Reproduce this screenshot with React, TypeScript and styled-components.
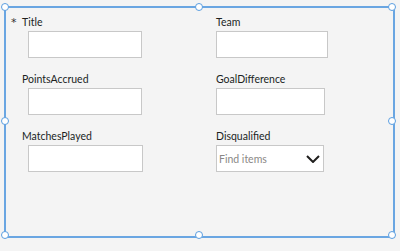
import React from "react";
import styled, { createGlobalStyle } from "styled-components";

const Global = createGlobalStyle`
  html, body { margin: 0; padding: 0; background: #f4f4f4; }
  body { font-family: Lato, "Open Sans", sans-serif; }
`;

const Page = styled.div`
  width: 400px;
  height: 251px;
  background: #f4f4f4;
  padding: 6px 0 0 4px;
  box-sizing: border-box;
`;

const Selection = styled.div`
  position: relative;
  width: 391px;
  height: 232px;
  box-sizing: border-box;
  border: 2px solid #6aa6e2;
  background: #f4f4f4;
`;

const Handle = styled.span<{ $x: string; $y: string }>`
  position: absolute;
  left: ${(p) => p.$x};
  top: ${(p) => p.$y};
  width: 8px;
  height: 8px;
  margin: -5px 0 0 -5px;
  box-sizing: border-box;
  border-radius: 50%;
  border: 1.5px solid #5b9ee0;
  background: #ffffff;
`;

const FormGrid = styled.div`
  display: grid;
  grid-template-columns: 205px 1fr;
  row-gap: 14px;
  padding: 7px 0 0 5px;
`;

const Field = styled.div`
  display: flex;
  flex-direction: column;
  gap: 2px;
`;

const LabelRow = styled.div`
  display: flex;
  align-items: center;
  height: 14px;
  font-size: 10.5px;
  color: #201f1e;
`;

const Marker = styled.span`
  width: 11px;
  font-family: "DejaVu Sans", sans-serif;
  font-size: 11px;
  line-height: 11px;
  align-self: flex-start;
  margin-top: 2px;
  color: #323130;
`;

const Box = styled.div<{ $indent: number; $w: number }>`
  margin-left: ${(p) => p.$indent}px;
  width: ${(p) => p.$w}px;
  height: 27px;
  box-sizing: border-box;
  border: 1px solid #c8c8c8;
  background: #ffffff;
  display: flex;
  align-items: center;
  justify-content: space-between;
  padding: 0 3px 0 2px;
`;

const Placeholder = styled.span`
  font-size: 10.5px;
  color: #8a8886;
`;

type F = { label: string; required?: boolean; left: boolean; w: number; dropdown?: boolean };

const fields: F[] = [
  { label: "Title", required: true, left: true, w: 114 },
  { label: "Team", left: false, w: 112 },
  { label: "PointsAccrued", left: true, w: 114 },
  { label: "GoalDifference", left: false, w: 109 },
  { label: "MatchesPlayed", left: true, w: 115 },
  { label: "Disqualified", left: false, w: 108, dropdown: true },
];

const Chevron = () => (
  <svg width="14" height="8" viewBox="0 0 14 8">
    <path d="M1 1 L7 7 L13 1" fill="none" stroke="#201f1e" strokeWidth="2" />
  </svg>
);

export default function App() {
  const hs = [
    ["0%", "0%"], ["50%", "0%"], ["100%", "0%"],
    ["0%", "50%"], ["100%", "50%"],
    ["0%", "100%"], ["50%", "100%"], ["100%", "100%"],
  ];
  return (
    <Page>
      <Global />
      <Selection>
        <FormGrid>
          {fields.map((f) => (
            <Field key={f.label}>
              <LabelRow>
                {f.left && <Marker>{f.required ? "*" : ""}</Marker>}
                {f.label}
              </LabelRow>
              <Box $indent={f.left ? 17 : 0} $w={f.w}>
                {f.dropdown && (
                  <>
                    <Placeholder>Find items</Placeholder>
                    <Chevron />
                  </>
                )}
              </Box>
            </Field>
          ))}
        </FormGrid>
        {hs.map(([x, y], i) => (
          <Handle key={i} $x={x} $y={y} />
        ))}
      </Selection>
    </Page>
  );
}
